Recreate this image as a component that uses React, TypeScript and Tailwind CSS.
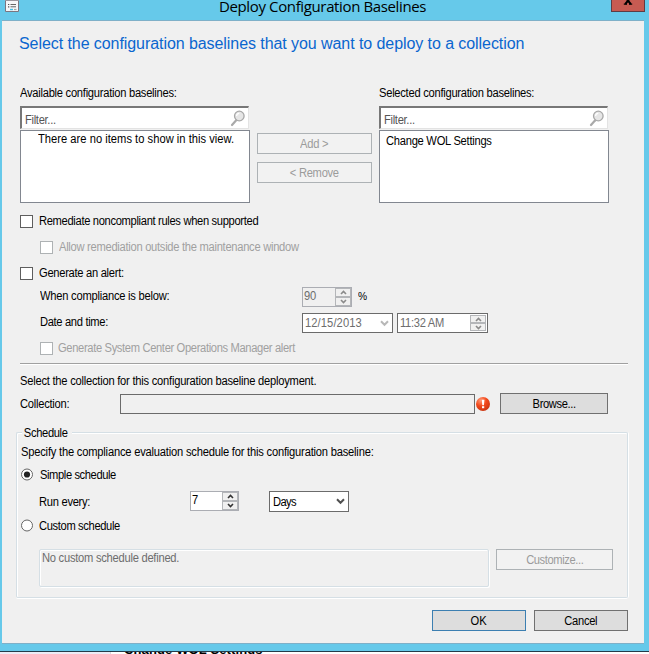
import React from "react";

type TextProps = { children: React.ReactNode; className?: string };

function Txt({ children, className = "" }: TextProps) {
  return <span className={`block shrink-0 origin-left scale-x-93 whitespace-pre ${className}`}>{children}</span>;
}

function Check({ disabled = false }: { disabled?: boolean }) {
  return (
    <span
      className={`block h-[13px] w-[13px] shrink-0 border bg-white ${disabled ? "border-[#aeb2b4]" : "border-[#5e5e5e]"}`}
    />
  );
}

function Radio({ checked = false }: { checked?: boolean }) {
  return (
    <svg width="13" height="13" viewBox="0 0 13 13" className="-mt-px block shrink-0">
      <circle cx="6" cy="6.5" r="5.5" fill="#fff" stroke="#666" strokeWidth="1" />
      {checked && <circle cx="6" cy="6.5" r="3.1" fill="#222" />}
    </svg>
  );
}

function Magnifier() {
  return (
    <svg width="16" height="17" viewBox="0 0 16 17" className="block shrink-0">
      <path d="M6 10.5 L2 15" stroke="#a9a9a9" strokeWidth="2.2" strokeLinecap="round" />
      <circle cx="9.3" cy="6" r="4.8" fill="#e6e6e6" stroke="#a8a8a8" strokeWidth="1.3" />
      <path d="M6.6 6 A2.8 2.8 0 0 1 9.3 3.4" stroke="#fff" strokeWidth="1.2" fill="none" />
    </svg>
  );
}

function FilterBox() {
  return (
    <div className="flex h-[23px] w-[229px] items-start justify-between border-t-2 border-l-2 border-r border-b border-t-[#777] border-l-[#777] border-r-[#e3e3e3] border-b-[#e3e3e3] bg-white pl-[3px] pr-[2px]">
      <Txt className="mt-[5px] tracking-[-0.33px] text-[#555]">Filter...</Txt>
      <span className="mt-[2px]"><Magnifier /></span>
    </div>
  );
}

function Arrow({ up = false, color }: { up?: boolean; color: string }) {
  return (
    <svg width="7" height="5" viewBox="0 0 7 5" className="block">
      <path d={up ? "M1 4 L3.5 1.5 L6 4" : "M1 1 L3.5 3.5 L6 1"} fill="none" stroke={color} strokeWidth="1.6" />
    </svg>
  );
}

function Spin({ color }: { color: string }) {
  return (
    <div className="flex w-[16px] shrink-0 flex-col bg-[#b4b6b9]">
      <div className="flex flex-1 items-center justify-center border border-[#b4b6b9] bg-[#f0f0f0]"><Arrow up color={color} /></div>
      <div className="flex flex-1 items-center justify-center border border-[#b4b6b9] bg-[#f0f0f0]"><Arrow color={color} /></div>
    </div>
  );
}

function Chevron({ color }: { color: string }) {
  return (
    <svg width="9" height="7" viewBox="0 0 9 7" className="block shrink-0">
      <path d="M1 1.3 L4.5 4.8 L8 1.3" fill="none" stroke={color} strokeWidth="2" />
    </svg>
  );
}

function Button({ children, className = "" }: TextProps) {
  return (
    <button className={`flex h-[21px] shrink-0 items-center justify-center border ${className}`}>
      <span className="block scale-x-93 whitespace-pre">{children}</span>
    </button>
  );
}

const ENABLED = "border-[#707070] bg-[#dddddd] text-black";
const DISABLED = "border-[#adb2b5] bg-[#f2f2f2] text-[#9b9b9b]";

export default function App() {
  return (
    <div className="flex h-[654px] w-[649px] flex-col overflow-hidden bg-[#66c9ea] font-['Liberation_Sans',Arial,sans-serif] text-[12px] leading-[14px] text-black">
      <header className="flex h-[20px] shrink-0 items-start">
        <svg width="14" height="12" viewBox="0 0 14 12" className="ml-[5px] block shrink-0">
          <path d="M0.5 -1 V11.5 H13.5 V-1" fill="#f6f6f8" stroke="#7b7680" />
          <path d="M0 0.5 H14" stroke="#9a969e" />
          <path d="M3 4.5 H4.3 M3 6.8 H4.3" stroke="#555" strokeWidth="1.2" />
          <path d="M5.5 4.5 H11 M5.5 6.8 H11" stroke="#666" />
          <path d="M5 9.5 H8" stroke="#3fc0e8" strokeWidth="1.4" />
          <path d="M9 9.5 H11.5" stroke="#9aa" strokeWidth="1.2" />
        </svg>
        <div className="-mt-[4px] ml-[200px] w-[392px] whitespace-pre font-['Open_Sans',sans-serif] text-[15px] leading-[20px] tracking-[-0.37px]">
          Deploy Configuration Baselines
        </div>
        <div className="flex h-[12px] w-[34px] justify-center overflow-hidden border border-t-0 border-[#5f3c44] bg-[#c75b52]">
          <svg width="12" height="11" viewBox="0 0 12 11" className="block">
            <path d="M3 -3 L8.7 4 M9 -3 L3.3 4" stroke="#000" strokeWidth="2" />
            <path d="M1.8 4.2 H5 M7 4.2 H10.2" stroke="#000" strokeWidth="1.2" />
          </svg>
        </div>
      </header>

      <main className="ml-[2px] flex h-[624px] w-[642px] shrink-0 flex-col border-y border-[#7fb0c8] bg-[#f0f0f0] pl-[18px]">
        <h1 className="-ml-px h-[65px] shrink-0 whitespace-pre pt-[13px] text-[16px] leading-[20px] tracking-[-0.07px] text-[#0a66cf]">
          Select the configuration baselines that you want to deploy to a collection
        </h1>

        <div className="flex h-[20px] shrink-0">
          <Txt className="w-[359px] tracking-[-0.28px]">Available configuration baselines:</Txt>
          <Txt className="tracking-[-0.28px]">Selected configuration baselines:</Txt>
        </div>

        <section className="flex h-[97px] shrink-0">
          <div className="flex w-[230px] flex-col gap-px">
            <FilterBox />
            <div className="h-[73px] border border-[#828790] bg-white pl-[17px] pt-[1px]">
              <Txt className="tracking-[0.02px]">There are no items to show in this view.</Txt>
            </div>
          </div>
          <div className="ml-[7px] flex w-[115px] flex-col gap-[8px] pt-[27px]">
            <Button className={`tracking-[-0.3px] ${DISABLED}`}>Add &gt;</Button>
            <Button className={`tracking-[-0.3px] ${DISABLED}`}>&lt; Remove</Button>
          </div>
          <div className="ml-[7px] flex w-[230px] flex-col gap-px">
            <FilterBox />
            <div className="h-[73px] border border-[#828790] bg-white pl-[6px] pt-[3px]">
              <Txt className="tracking-[-0.28px]">Change WOL Settings</Txt>
            </div>
          </div>
        </section>

        <div className="mt-[12px] flex h-[13px] shrink-0 items-center gap-[6px]">
          <Check />
          <Txt className="-mt-[2px] tracking-[-0.35px]">Remediate noncompliant rules when supported</Txt>
        </div>
        <div className="ml-[20px] mt-[13px] flex h-[13px] shrink-0 items-center gap-[6px] text-[#a0a0a0]">
          <Check disabled />
          <Txt className="-mt-[2px] tracking-[-0.3px]">Allow remediation outside the maintenance window</Txt>
        </div>
        <div className="mt-[13px] flex h-[13px] shrink-0 items-center gap-[6px]">
          <Check />
          <Txt className="-mt-[2px] tracking-[-0.31px]">Generate an alert:</Txt>
        </div>

        <div className="ml-[20px] mt-[7px] flex h-[20px] shrink-0 items-center">
          <Txt className="-mt-[2px] w-[262px] tracking-[-0.25px]">When compliance is below:</Txt>
          <div className="flex h-[20px] w-[50px] justify-between border border-[#abadb3] text-[#6d6d6d]">
            <Txt className="pl-[1px] pt-[1px] tracking-[-0.05px]">90</Txt>
            <Spin color="#8a8a8a" />
          </div>
          <Txt className="-mt-[2px] ml-[6px] text-[11px]">%</Txt>
        </div>
        <div className="ml-[20px] mt-[6px] flex h-[20px] shrink-0 items-center">
          <Txt className="-mt-[2px] w-[262px] tracking-[-0.36px]">Date and time:</Txt>
          <div className="flex h-[20px] w-[91px] items-center justify-between border border-[#6b6b6b] bg-white pl-[2px] pr-[3px] text-[#6d6d6d]">
            <Txt className="tracking-[0.1px]">12/15/2013</Txt>
            <Chevron color="#b8b8b8" />
          </div>
          <div className="ml-[4px] flex h-[20px] w-[91px] justify-between border border-[#6b6b6b] bg-white p-[1px] text-[#6d6d6d]">
            <Txt className="pl-px pt-px tracking-[-0.3px]">11:32 AM</Txt>
            <Spin color="#8a8a8a" />
          </div>
        </div>
        <div className="ml-[20px] mt-[9px] flex h-[13px] shrink-0 items-center gap-[5px] text-[#a0a0a0]">
          <Check disabled />
          <Txt className="-mt-[2px] tracking-[-0.37px]">Generate System Center Operations Manager alert</Txt>
        </div>

        <div className="mt-[8px] h-[2px] w-[608px] shrink-0 border-b border-t border-b-white border-t-[#a0a0a0]" />

        <Txt className="mt-[9px] tracking-[-0.25px]">Select the collection for this configuration baseline deployment.</Txt>
        <div className="mt-[5px] flex h-[21px] shrink-0 items-center">
          <Txt className="w-[100px] tracking-[-0.28px]">Collection:</Txt>
          <div className="mt-px h-[20px] w-[355px] border border-[#6b6b6b]" />
          <svg width="15" height="15" viewBox="0 0 15 15" className="ml-px mt-px block shrink-0">
            <defs>
              <radialGradient id="alert" cx="0.35" cy="0.25" r="0.8">
                <stop offset="0" stopColor="#ff9a78" />
                <stop offset="0.5" stopColor="#f2481a" />
                <stop offset="1" stopColor="#c83410" />
              </radialGradient>
            </defs>
            <circle cx="7" cy="7" r="7" fill="url(#alert)" />
            <path d="M5.8 2.8 H8.4 L7.9 8.2 H6.3 Z" fill="#fff" />
            <rect x="6" y="9.2" width="2.2" height="2" fill="#fff" />
          </svg>
          <Button className={`ml-[9px] w-[108px] tracking-[-0.42px] ${ENABLED}`}>Browse...</Button>
        </div>

        <div className="-ml-[4px] mt-[12px] flex h-[172px] w-[612px] shrink-0 flex-col">
          <div className="flex h-[14px] shrink-0 items-center">
            <div className="h-[8px] w-[6px] self-end rounded-tl-[2px] border-l border-t border-[#d5dfe5] shadow-[inset_1px_1px_0_white]" />
            <Txt className="w-[50px] pl-[2px] tracking-[-0.38px]">Schedule</Txt>
            <div className="h-[8px] flex-1 self-end rounded-tr-[2px] border-r border-t border-[#d5dfe5] shadow-[inset_0_1px_0_white,1px_0_0_white]" />
          </div>
          <div className="flex flex-1 flex-col rounded-b-[2px] border border-t-0 border-[#d5dfe5] pl-[4px] shadow-[inset_1px_0_0_white,0_1px_0_white,1px_0_0_white]">
            <Txt className="mt-[5px] tracking-[-0.22px]">Specify the compliance evaluation schedule for this configuration baseline:</Txt>
            <div className="mt-[8px] flex h-[15px] shrink-0 items-center gap-[6px]">
              <Radio checked />
              <Txt className="tracking-[-0.43px]">Simple schedule</Txt>
            </div>
            <div className="ml-[18px] mt-[9px] flex h-[21px] shrink-0 items-start">
              <Txt className="mt-[4px] w-[151px] tracking-[-0.3px]">Run every:</Txt>
              <div className="flex h-[20px] w-[49px] justify-between border border-[#abadb3] bg-white">
                <Txt className="pl-[1px] pt-[1px]">7</Txt>
                <Spin color="#333" />
              </div>
              <div className="ml-[30px] flex h-[21px] w-[80px] items-center justify-between border border-[#6b6b6b] bg-white pl-[3px] pr-[3px]">
                <Txt className="pt-px tracking-[-0.7px]">Days</Txt>
                <Chevron color="#505050" />
              </div>
            </div>
            <div className="mt-[6px] flex h-[15px] shrink-0 items-center gap-[5px]">
              <Radio />
              <Txt className="tracking-[-0.38px]">Custom schedule</Txt>
            </div>
            <div className="ml-[18px] mt-[16px] flex shrink-0 items-start">
              <div className="h-[38px] w-[450px] rounded-[2px] border border-[#d5dfe5] pl-[2px] pt-[1px] text-[#6d6d6d] shadow-[inset_1px_1px_0_white,1px_1px_0_white]">
                <Txt className="tracking-[-0.27px]">No custom schedule defined.</Txt>
              </div>
              <Button className={`ml-[7px] w-[117px] tracking-[-0.43px] ${DISABLED}`}>Customize...</Button>
            </div>
          </div>
        </div>

        <footer className="mt-[12px] flex w-[608px] shrink-0 justify-end gap-[8px]">
          <Button className="w-[94px] border-[#3c7fb1] bg-[#dddddd]">OK</Button>
          <Button className={`w-[94px] tracking-[-0.3px] ${ENABLED}`}>Cancel</Button>
        </footer>
      </main>

      <div className="mt-[7px] flex h-[3px] shrink-0 overflow-hidden border-t border-[#243b4a]">
        <div className="w-[111px] border-r border-[#d8d8e0] bg-[#ececf6]" />
        <div className="flex-1 bg-white pl-[13px]">
          <div className="-mt-[9px] whitespace-pre text-[13px] font-bold tracking-[0.13px]">Change WOL Settings</div>
        </div>
      </div>
    </div>
  );
}
